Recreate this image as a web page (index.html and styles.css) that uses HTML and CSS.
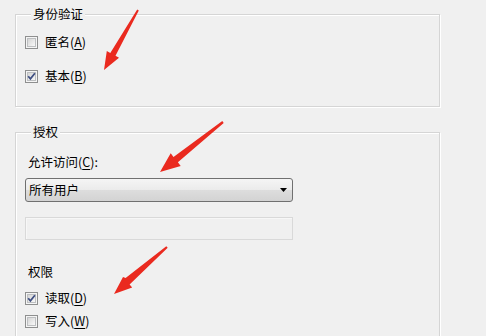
FILE: index.html
```html
<!DOCTYPE html>
<html lang="zh-CN">
<head>
<meta charset="utf-8">
<title>身份验证</title>
<link rel="stylesheet" href="styles.css">
</head>
<body>
<svg class="defs" width="0" height="0" aria-hidden="true">
  <defs>
    <linearGradient id="cbg" x1="0" y1="0" x2="1" y2="1">
      <stop offset="0" stop-color="#d3d3d3"/>
      <stop offset="1" stop-color="#fbfbfb"/>
    </linearGradient>
  </defs>
</svg>
<div class="page">
  <fieldset class="group g1">
    <legend>身份验证</legend>
    <label class="check">
      <svg class="box" viewBox="0 0 13 13" width="13" height="13"><rect x=".5" y=".5" width="12" height="12" fill="#f5f5f5" stroke="#8e8f8f"/><rect x="2.5" y="2.5" width="8" height="8" fill="url(#cbg)" stroke="#bdbfc1"/></svg>
      <span>匿名(<u>A</u>)</span>
    </label>
    <label class="check c2">
      <svg class="box" viewBox="0 0 13 13" width="13" height="13"><rect x=".5" y=".5" width="12" height="12" fill="#f5f5f5" stroke="#8e8f8f"/><rect x="2.5" y="2.5" width="8" height="8" fill="url(#cbg)" stroke="#bdbfc1"/><path d="M3.2 6.2 L5.4 8.9 L9.9 3.2" fill="none" stroke="#3f4f82" stroke-width="1.7"/></svg>
      <span>基本(<u>B</u>)</span>
    </label>
  </fieldset>

  <fieldset class="group g2">
    <legend>授权</legend>
    <div class="field-label">允许访问(<u>C</u>):</div>
    <div class="select">
      <span>所有用户</span>
      <svg class="caret" viewBox="0 0 7 4" width="7" height="4"><polygon points="0,0 7,0 3.5,4" fill="#000"/></svg>
    </div>
    <div class="textbox"></div>
    <div class="perm-label">权限</div>
    <label class="check p1">
      <svg class="box" viewBox="0 0 13 13" width="13" height="13"><rect x=".5" y=".5" width="12" height="12" fill="#f5f5f5" stroke="#8e8f8f"/><rect x="2.5" y="2.5" width="8" height="8" fill="url(#cbg)" stroke="#bdbfc1"/><path d="M3.2 6.2 L5.4 8.9 L9.9 3.2" fill="none" stroke="#3f4f82" stroke-width="1.7"/></svg>
      <span>读取(<u>D</u>)</span>
    </label>
    <label class="check p2">
      <svg class="box" viewBox="0 0 13 13" width="13" height="13"><rect x=".5" y=".5" width="12" height="12" fill="#f5f5f5" stroke="#8e8f8f"/><rect x="2.5" y="2.5" width="8" height="8" fill="url(#cbg)" stroke="#bdbfc1"/></svg>
      <span>写入(<u>W</u>)</span>
    </label>
  </fieldset>
</div>

<svg class="arrows" viewBox="0 0 486 336" width="486" height="336" aria-hidden="true">
  <polygon fill="#ea2a1f" points="138.8,10.5 115.5,55.8 119,57.8 104,70 106.8,50.9 110.3,52.9 137.2,9.5"/>
  <polygon fill="#ea2a1f" points="223.7,122.9 177.9,162.3 180.7,165.9 160,172 170.7,153.3 173.5,156.9 222.3,121.1"/>
  <polygon fill="#ea2a1f" points="167.7,247.8 129.6,284.5 132.2,287.5 114,294 123,276.9 125.6,277.9 166.3,246.2"/>
</svg>
</body>
</html>
```

FILE: styles.css
```css
html, body {
  margin: 0;
  height: 336px;
  overflow: hidden;
  background: #f0f0f0;
}

body {
  position: relative;
  font-family: "Noto Sans CJK SC", "Noto Sans", sans-serif;
  font-size: 12.5px;
  line-height: 14px;
  color: #000;
}

.defs {
  position: absolute;
}

.page {
  display: flex;
  flex-direction: column;
  padding: 7px 0 0 15px;
}

.group {
  margin: 0;
  width: 425px;
  box-sizing: border-box;
  border: 1px solid #d5d5d5;
  box-shadow: inset 1px 1px 0 #fff, 1px 1px 0 #fff;
  min-inline-size: 0;
}

.group legend {
  margin-left: 6px;
  padding: 0 2px;
  background: #f0f0f0;
  line-height: 14px;
}

.g1 {
  padding: 14px 0 23px 9px;
}

.g2 {
  margin-top: 18px;
  padding: 16px 0 20px 9px;
}

.check {
  display: flex;
  align-items: center;
  gap: 7px;
  height: 14px;
}

.box {
  display: block;
  flex: none;
}

.check u,
.field-label u {
  text-decoration-thickness: 1px;
  text-underline-offset: 2px;
}

.c2 {
  margin-top: 20px;
}

.field-label {
  margin-left: 3px;
}

.select {
  margin-top: 9px;
  width: 268px;
  height: 24px;
  box-sizing: border-box;
  border: 1px solid #707070;
  border-radius: 3px;
  background: linear-gradient(#f5f5f5, #ebebeb 50%, #dddddd 51%, #d3d3d3);
  display: flex;
  align-items: center;
  justify-content: space-between;
  padding: 0 5px 0 3px;
}

.caret {
  display: block;
}

.textbox {
  margin-top: 15px;
  width: 268px;
  height: 23px;
  box-sizing: border-box;
  border: 1px solid #d9d9d9;
  background: #f0f0f0;
  box-shadow: inset 1px 1px 0 #f7f7f7;
}

.perm-label {
  margin-top: 25px;
  margin-left: 3px;
}

.p1 {
  margin-top: 12px;
}

.p2 {
  margin-top: 9px;
}

.arrows {
  position: absolute;
  left: 0;
  top: 0;
  pointer-events: none;
}
```
